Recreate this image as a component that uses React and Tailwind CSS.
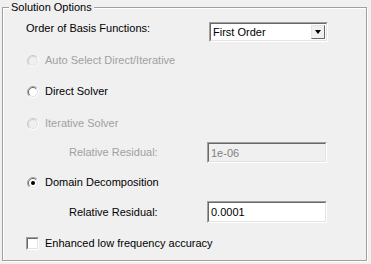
import React from 'react'

const font = { fontFamily: '"Liberation Sans", Arial, sans-serif' }

function Radio({ checked, disabled }) {
  return (
    <svg width="12" height="12" viewBox="0 0 12 12" className="shrink-0">
      <circle cx="6" cy="6" r="4.5" fill={disabled ? '#f0f0f0' : '#fff'} />
      <path d="M2.1 9.9A5.5 5.5 0 0 1 9.9 2.1" fill="none" stroke={disabled ? '#c8c8c8' : '#a0a0a0'} />
      <path d="M9.9 2.1A5.5 5.5 0 0 1 2.1 9.9" fill="none" stroke="#fff" />
      <path d="M2.8 9.2A4.5 4.5 0 0 1 9.2 2.8" fill="none" stroke={disabled ? '#d4d4d4' : '#696969'} />
      <path d="M9.2 2.8A4.5 4.5 0 0 1 2.8 9.2" fill="none" stroke="#e3e3e3" />
      {checked && <circle cx="6" cy="6" r="2" fill="#000" />}
    </svg>
  )
}

function Sunken({ className, children, bg }) {
  return (
    <div className={`border border-t-[#a0a0a0] border-l-[#a0a0a0] border-r-white border-b-white ${className}`}>
      <div className={`h-full border border-t-[#696969] border-l-[#696969] border-r-[#e3e3e3] border-b-[#e3e3e3] ${bg}`}>
        {children}
      </div>
    </div>
  )
}

function Option({ label, checked, disabled, className }) {
  return (
    <div className={`flex items-center h-[13px] pl-[24px] gap-[6px] ${className}`}>
      <Radio checked={checked} disabled={disabled} />
      <span className={disabled ? 'text-[#a0a0a0]' : 'text-black'}>{label}</span>
    </div>
  )
}

export default function App() {
  return (
    <div className="w-[371px] h-[264px] bg-[#f0f0f0] pt-[7px] pl-[2px] text-[11px] leading-[13px]" style={font}>
      <div className="relative w-[365px] h-[254px] border border-[#a0a0a0] shadow-[1px_1px_0_#fff,inset_1px_1px_0_#fff] flex flex-col">
        <span className="absolute -top-[7px] left-[6px] px-[2px] bg-[#f0f0f0] text-black">Solution Options</span>

        <div className="flex items-start mt-[14px] pl-[23px]">
          <span className="w-[183px]">Order of Basis Functions:</span>
          <Sunken className="w-[119px] h-[20px]" bg="bg-white">
            <div className="flex h-full items-center">
              <span className="flex-1 pl-[2px]">First Order</span>
              <div className="w-[14px] h-[14px] mr-[1px] border border-t-[#e3e3e3] border-l-[#e3e3e3] border-r-[#696969] border-b-[#696969] bg-[#f0f0f0] flex items-center justify-center">
                <div className="w-0 h-0 border-l-[3.5px] border-r-[3.5px] border-t-[4px] border-l-transparent border-r-transparent border-t-black" />
              </div>
            </div>
          </Sunken>
        </div>

        <Option className="mt-[12px]" label="Auto Select Direct/Iterative" disabled />
        <Option className="mt-[18px]" label="Direct Solver" />
        <Option className="mt-[19px]" label="Iterative Solver" disabled />

        <div className="flex items-center mt-[12px] h-[21px] pl-[66px]">
          <span className="w-[138px] text-[#a0a0a0]">Relative Residual:</span>
          <Sunken className="w-[120px] h-[21px]" bg="bg-[#f0f0f0]">
            <span className="block pl-[2px] pt-[3px] text-[#808080]">1e-06</span>
          </Sunken>
        </div>

        <Option className="mt-[13px]" label="Domain Decomposition" checked />

        <div className="flex items-center mt-[12px] h-[22px] pl-[66px]">
          <span className="w-[138px]">Relative Residual:</span>
          <Sunken className="w-[120px] h-[22px]" bg="bg-white">
            <span className="block pl-[2px] pt-[3px] text-black">0.0001</span>
          </Sunken>
        </div>

        <div className="flex items-center h-[13px] mt-[14px] pl-[23px] gap-[6px]">
          <Sunken className="w-[13px] h-[13px] shrink-0" bg="bg-white" />
          <span>Enhanced low frequency accuracy</span>
        </div>
      </div>
    </div>
  )
}
